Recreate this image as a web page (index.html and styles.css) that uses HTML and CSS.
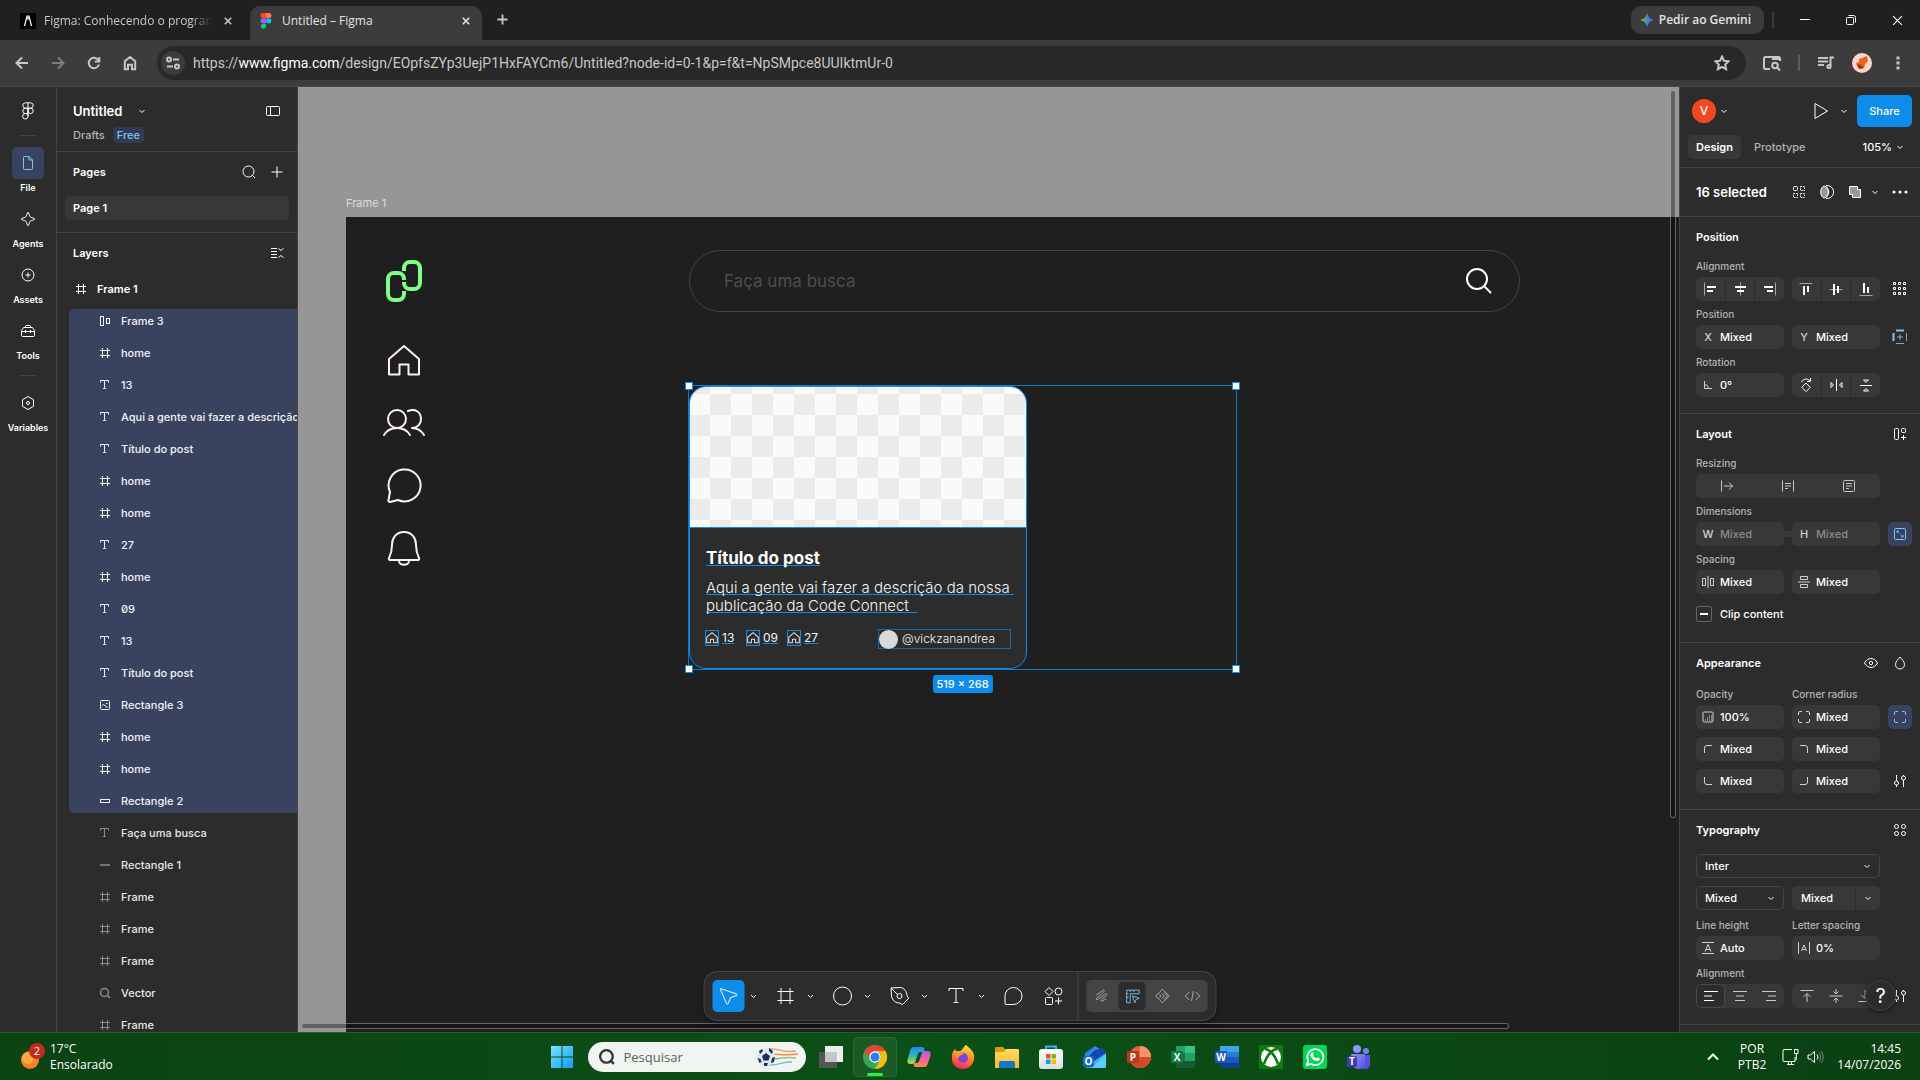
FILE: index.html
```html
<!DOCTYPE html>
<html lang="pt-BR">
<head>
<meta charset="utf-8">
<meta name="viewport" content="width=device-width, initial-scale=1">
<title>Untitled – Figma</title>
<link rel="stylesheet" href="styles.css">
</head>
<body>
<svg class="sprite" aria-hidden="true">
  <defs>
    <linearGradient id="g-win" x1="0" y1="0" x2="1" y2="1"><stop offset="0" stop-color="#7be4ff"/><stop offset="1" stop-color="#0f9bff"/></linearGradient>
    <linearGradient id="g-fold" x1="0" y1="0" x2="0" y2="1"><stop offset="0" stop-color="#ffdc5e"/><stop offset="1" stop-color="#fbb72a"/></linearGradient>
    <linearGradient id="g-fox" x1="0.7" y1="0" x2="0.4" y2="1"><stop offset="0" stop-color="#ffe24b"/><stop offset=".5" stop-color="#ff8a1e"/><stop offset="1" stop-color="#f5246e"/></linearGradient>
    <linearGradient id="g-cop1" x1="0" y1="0" x2="0" y2="1"><stop offset="0" stop-color="#1f8cf0"/><stop offset=".5" stop-color="#28b8b8"/><stop offset="1" stop-color="#c8d92e"/></linearGradient>
    <linearGradient id="g-cop2" x1="0" y1="0" x2="0" y2="1"><stop offset="0" stop-color="#b05cf0"/><stop offset=".5" stop-color="#f0609c"/><stop offset="1" stop-color="#ff8a4c"/></linearGradient>
    <linearGradient id="g-out" x1="0" y1="0" x2="1" y2="1"><stop offset="0" stop-color="#1a6fe0"/><stop offset="1" stop-color="#4fd0ff"/></linearGradient>
    <linearGradient id="g-teams" x1="0" y1="0" x2="1" y2="1"><stop offset="0" stop-color="#8f95ff"/><stop offset="1" stop-color="#5a50e0"/></linearGradient>
    <linearGradient id="g-gem" x1="0" y1="0" x2="1" y2="0"><stop offset="0" stop-color="#f7c52c"/><stop offset=".35" stop-color="#3fae6a"/><stop offset=".55" stop-color="#3b82f6"/><stop offset="1" stop-color="#3b82f6"/></linearGradient>
    <linearGradient id="g-bag" x1="0" y1="0" x2="0" y2="1"><stop offset="0" stop-color="#ffffff"/><stop offset="1" stop-color="#d9dde0"/></linearGradient>
  </defs>
  <symbol id="chev" viewBox="0 0 8 8"><path d="M1.500 3 4 5.500 6.500 3"/></symbol>
  <symbol id="x" viewBox="0 0 10 10"><path d="m1 1 8 8M9 1 1 9"/></symbol>
  <symbol id="plus" viewBox="0 0 12 12"><path d="M6 .5v11M.5 6h11"/></symbol>
  <symbol id="figma" viewBox="0 0 12 18"><path d="M3.500.8h5a2.700 2.700 0 0 1 0 5.400h-5a2.700 2.700 0 0 1 0-5.400ZM6 .8v13.700M3.500 6.200H6v5.400H3.500a2.700 2.700 0 0 1 0-5.400ZM6 11.600v2.900a2.700 2.700 0 1 1-2.500-2.900H6M8.500 6.200a2.700 2.700 0 1 1 0 5.400A2.700 2.700 0 0 1 6 8.900a2.600 2.600 0 0 1 2.500-2.700Z"/></symbol>
  <symbol id="file" viewBox="0 0 12 16"><path d="M1.500 2.500a1 1 0 0 1 1-1H7L10.500 5v8.500a1 1 0 0 1-1 1h-7a1 1 0 0 1-1-1ZM7 1.500V5h3.500"/></symbol>
  <symbol id="agents" viewBox="0 0 16 16"><path d="M8 1.200c.8 0 1.300 4 2.200 4.700.8.800 4.600 1.200 4.600 2.100s-3.800 1.400-4.600 2.200C9.300 11 8.800 14.800 8 14.800S6.700 11 5.800 10.200C5 9.400 1.200 8.900 1.200 8s3.800-1.300 4.600-2.100C6.700 5.200 7.200 1.200 8 1.200Z"/></symbol>
  <symbol id="assets" viewBox="0 0 16 16"><circle cx="8" cy="8" r="6"/><path d="M8 5.500v5M5.500 8h5"/></symbol>
  <symbol id="tools" viewBox="0 0 16 16"><path d="M3.500 4.500h9l2 3v5a1 1 0 0 1-1 1h-11a1 1 0 0 1-1-1v-5ZM5.500 4.500v-1a1 1 0 0 1 1-1h3a1 1 0 0 1 1 1v1M1.500 8.500h13M5.500 7v3M10.500 7v3"/></symbol>
  <symbol id="vars" viewBox="0 0 16 16"><path d="m8 1.500 5.500 3.200v6.600L8 14.500l-5.500-3.200V4.700Z"/><circle cx="8" cy="8" r="1.500"/></symbol>
  <symbol id="sidebar" viewBox="0 0 16 12"><rect x="1.500" y="1.500" width="13" height="9" rx="1"/><path d="M5.500 1.500v9"/></symbol>
  <symbol id="search" viewBox="0 0 14 14"><circle cx="6.500" cy="6.500" r="5.500"/><path d="m10.400 10.400 2.600 2.600"/></symbol>
  <symbol id="collapse" viewBox="0 0 14 12"><path d="M1 1.500h6M1 4.500h6M1 7.500h6M1 10.500h6M8.500 1.500l2.500 2 2.500-2M8.500 10.500l2.500-2 2.500 2"/></symbol>
  <symbol id="frame" viewBox="0 0 12 12"><path d="M3.500 1v10M8.500 1v10M1 3.500h10M1 8.500h10"/></symbol>
  <symbol id="text" viewBox="0 0 12 12"><path d="M1.500 3.500v-2h8v2M5.500 1.500v8M4 9.500h3"/></symbol>
  <symbol id="auto" viewBox="0 0 12 12"><rect x="1.500" y="1.500" width="3" height="9"/><rect x="7.500" y="3.500" width="3" height="5"/></symbol>
  <symbol id="image" viewBox="0 0 12 12"><rect x="1.500" y="1.500" width="9" height="9" rx="1"/><path d="m8.500 8.500-4-3-1.500 1M7 4.500h1.500"/></symbol>
  <symbol id="rect" viewBox="0 0 12 12"><rect x="1.500" y="4.500" width="9" height="3"/></symbol>
  <symbol id="line" viewBox="0 0 12 12"><path stroke-width="1.500" d="M1 6h10"/></symbol>
  <symbol id="zoomv" viewBox="0 0 12 12"><circle cx="5.500" cy="5.500" r="4" stroke-width="1.500"/><path stroke-width="1.500" d="m8 8 3 3"/></symbol>
  <symbol id="play" viewBox="0 0 16 18"><path stroke-linejoin="round" d="M2 1.500v15L14.500 9Z"/></symbol>
  <symbol id="dots4" viewBox="0 0 14 14"><rect x="1.500" y="1.500" width="4" height="4" rx="1"/><path stroke-dasharray="1.500 1" d="M8.500 1.500h4v4h-4ZM1.500 8.500h4v4h-4ZM8.500 8.500h4v4h-4Z"/></symbol>
  <symbol id="mask" viewBox="0 0 16 16"><path d="M7 1.600a6.500 6.500 0 1 1 0 12.800"/><ellipse cx="5.500" cy="8" rx="3.800" ry="6" fill="#999"/><path d="M6 2.500C11 5 11 11 6 13.500"/></symbol>
  <symbol id="union" viewBox="0 0 14 14"><path fill="#999" d="M1.500 1.500h8v3h3v8h-8v-3h-3Z"/></symbol>
  <symbol id="more" viewBox="0 0 16 4"><path class="solid" d="M.5 2a1.500 1.500 0 1 1 3 0 1.500 1.500 0 0 1-3 0m6 0a1.500 1.500 0 1 1 3 0 1.500 1.500 0 0 1-3 0m6 0a1.500 1.500 0 1 1 3 0 1.500 1.500 0 0 1-3 0"/></symbol>
  <symbol id="al-l" viewBox="0 0 14 14"><path class="dim" d="M1.500.5v13"/><path class="bold" d="M4 5h9M4 9h6"/></symbol>
  <symbol id="al-c" viewBox="0 0 14 14"><path class="dim" d="M7.500.5v13"/><path class="bold" d="M2 5h11M4 9h7"/></symbol>
  <symbol id="al-r" viewBox="0 0 14 14"><path class="dim" d="M12.500.5v13"/><path class="bold" d="M1 5h9M4 9h6"/></symbol>
  <symbol id="al-t" viewBox="0 0 14 14"><path class="dim" d="M.5 1.500h13"/><path class="bold" d="M5 4v9M9 4v6"/></symbol>
  <symbol id="al-m" viewBox="0 0 14 14"><path class="dim" d="M.5 7.500h13"/><path class="bold" d="M5 2v11M9 4v7"/></symbol>
  <symbol id="al-b" viewBox="0 0 14 14"><path class="dim" d="M.5 13.500h13"/><path class="bold" d="M5 1v10M9 5v6"/></symbol>
  <symbol id="grid9" viewBox="0 0 14 14"><path d="M.5.500h2v2h-2ZM5.500.500h2v2h-2ZM10.500.500h2v2h-2ZM.5 5.500h2v2h-2ZM5.500 5.500h2v2h-2ZM10.500 5.500h2v2h-2ZM.5 10.500h2v2h-2ZM5.500 10.500h2v2h-2ZM10.500 10.500h2v2h-2Z"/></symbol>
  <symbol id="constrain" viewBox="0 0 16 16"><path stroke="#7cc4f8" stroke-width="2" d="M4 1.500h8M1.500 4v8"/><path class="dim" d="M4 14.500h8M14.500 4v8M8 5v6M5 8h6"/></symbol>
  <symbol id="angle" viewBox="0 0 10 10"><path d="M1.500 1v7.500H9M1.500 4.500a4 4 0 0 1 4 4"/></symbol>
  <symbol id="rot90" viewBox="0 0 14 16"><path d="m7 6 4.200 4.300L7 14.600l-4.200-4.300ZM2.500 5A5 5 0 0 1 11 4M11.500 1v3.500H8"/></symbol>
  <symbol id="fliph" viewBox="0 0 14 14"><path d="M7.500 1v12M2 4.500v5L4.500 7ZM13 4.500v5L10.500 7Z"/></symbol>
  <symbol id="flipv" viewBox="0 0 14 14"><path d="M1 7.500h12M4.500 2h5L7 4.500ZM4.500 13h5L7 10.500Z"/></symbol>
  <symbol id="addlayout" viewBox="0 0 14 14"><rect x="1.500" y="1.500" width="4" height="11" rx="1"/><rect x="8.500" y="1.500" width="4" height="4" rx="1"/><path d="M10.500 8v5M8 10.500h5"/></symbol>
  <symbol id="rs-a" viewBox="0 0 14 12"><path d="M1.500.5v11M4 6h8.500M9 2.500 12.500 6 9 9.500"/></symbol>
  <symbol id="rs-b" viewBox="0 0 14 12"><path d="M1.500.5v11M12.500.5v11M4 3.500h6M4 6h6M4 8.500h3"/></symbol>
  <symbol id="rs-c" viewBox="0 0 14 12"><rect x="1.500" y=".5" width="11" height="11" rx="1"/><path d="M4 3.500h6M4 6h6M4 8.500h3"/></symbol>
  <symbol id="aspect" viewBox="0 0 14 14"><rect x="1.500" y="1.500" width="11" height="11" rx="1"/><path d="M4 6V4h2M10 8v2H8"/><path stroke-dasharray="1 1" d="m4 4 6 6"/></symbol>
  <symbol id="sp-h" viewBox="0 0 14 14"><path d="M7 1v12M1.500 3.500h3v7h-3ZM9.500 3.500h3v7h-3Z"/></symbol>
  <symbol id="sp-v" viewBox="0 0 14 14"><path d="M1 7h12M3.500 1.500h7v3h-7ZM3.500 9.500h7v3h-7Z"/></symbol>
  <symbol id="eye" viewBox="0 0 16 12"><path d="M1.500 6C4.500 0 11.500 0 14.500 6 11.500 12 4.500 12 1.500 6Z"/><circle cx="8" cy="6" r="1.700"/></symbol>
  <symbol id="drop" viewBox="0 0 12 14"><path d="M6 1C8 3.500 10.500 5.700 10.500 8.500a4.500 4.500 0 0 1-9 0C1.500 5.700 4 3.500 6 1Z"/></symbol>
  <symbol id="opacity" viewBox="0 0 12 12"><rect x="1" y="1" width="10" height="10" rx="1"/><path stroke-dasharray="1 1" d="M3 9h7M5 7h5M7 5h3"/></symbol>
  <symbol id="corners" viewBox="0 0 14 14"><path d="M1.500 5V3a1.500 1.500 0 0 1 1.500-1.500h2M9 1.500h2A1.500 1.500 0 0 1 12.500 3v2M12.500 9v2a1.500 1.500 0 0 1-1.500 1.500H9M5 12.500H3A1.500 1.500 0 0 1 1.500 11V9"/></symbol>
  <symbol id="c-tl" viewBox="0 0 10 10"><path d="M1.500 9V4a2.500 2.500 0 0 1 2.500-2.500h5"/></symbol>
  <symbol id="c-tr" viewBox="0 0 10 10"><path d="M8.500 9V4A2.500 2.500 0 0 0 6 1.500H1"/></symbol>
  <symbol id="c-bl" viewBox="0 0 10 10"><path d="M1.500 1v5A2.500 2.500 0 0 0 4 8.500h5"/></symbol>
  <symbol id="c-br" viewBox="0 0 10 10"><path d="M8.500 1v5A2.500 2.500 0 0 1 6 8.500H1"/></symbol>
  <symbol id="sliders" viewBox="0 0 14 14"><path d="M3.500 1v6M3.500 11v2M10.500 1v1M10.500 6v7"/><circle cx="3.500" cy="9" r="2"/><circle cx="10.500" cy="4" r="2"/></symbol>
  <symbol id="styles" viewBox="0 0 14 14"><circle cx="3.500" cy="3.500" r="2"/><circle cx="10.500" cy="3.500" r="2"/><circle cx="3.500" cy="10.500" r="2"/><circle cx="10.500" cy="10.500" r="2"/></symbol>
  <symbol id="lh" viewBox="0 0 14 14"><path d="M1 1.500h12M1 12.500h12M4 10.500l3-7 3 7M5 8.500h4"/></symbol>
  <symbol id="ls" viewBox="0 0 14 14"><path d="M1.500 1v12M12.500 1v12M4.500 10 7 4l2.500 6M5.500 8.500h3"/></symbol>
  <symbol id="ta-l" viewBox="0 0 16 12"><path d="M1 1.500h14M1 6h8M1 10.500h10"/></symbol>
  <symbol id="ta-c" viewBox="0 0 16 12"><path d="M1 1.500h14M4 6h8M3 10.500h10"/></symbol>
  <symbol id="ta-r" viewBox="0 0 16 12"><path d="M1 1.500h14M7 6h8M5 10.500h10"/></symbol>
  <symbol id="tv-t" viewBox="0 0 14 14"><path d="M.5 1.500h13M7 13V4.500M3.500 8 7 4.500 10.500 8"/></symbol>
  <symbol id="tv-m" viewBox="0 0 14 14"><path d="M.5 7h13M7 0v5M4.500 2.500 7 5l2.500-2.500M7 14V9M4.500 11.500 7 9l2.500 2.500"/></symbol>
  <symbol id="tv-b" viewBox="0 0 14 14"><path d="M.5 12.500h13M7 1v8.500M3.500 6 7 9.500 10.500 6"/></symbol>
  <symbol id="home" viewBox="0 0 34 34"><path d="M17 2 2 15v15.500h10.500v-10h9v10H32V15Z"/></symbol>
</svg>

<header class="tabstrip">
  <div class="tab">
    <svg class="fav" viewBox="0 0 16 16"><rect width="16" height="16" fill="#000"/><path d="M4.500 13 7 3h2l2.500 10M8 4v3" fill="none" stroke="#fff" stroke-width="1.200"/></svg>
    <span class="tab-title tab-title--fade">Figma: Conhecendo o programa</span>
    <button class="tab-x" aria-label="Fechar"><svg width="8" height="8"><use href="#x"/></svg></button>
  </div>
  <div class="tab tab--on">
    <svg class="fav" viewBox="0 0 16 16"><path fill="#f24e1e" d="M5 0h3v5H5a2.500 2.500 0 0 1 0-5"/><path fill="#ff7262" d="M8 0h3a2.500 2.500 0 0 1 0 5H8z"/><path fill="#a259ff" d="M5 5.300h3v5H5a2.500 2.500 0 0 1 0-5"/><circle cx="10.700" cy="7.800" r="2.600" fill="#1abcfe"/><path fill="#0acf83" d="M5 10.700h3v2.500a2.600 2.600 0 1 1-3-2.500"/></svg>
    <span class="tab-title">Untitled – Figma</span>
    <button class="tab-x" aria-label="Fechar"><svg width="8" height="8"><use href="#x"/></svg></button>
  </div>
  <button class="newtab" aria-label="Nova guia"><svg width="11" height="11"><use href="#plus"/></svg></button>
  <button class="gemini"><svg width="14" height="14" viewBox="0 0 14 14"><path class="fill" fill="url(#g-gem)" d="M7 0c.8 4 3 6.200 7 7-4 .8-6.200 3-7 7-.8-4-3-6.200-7-7 4-.8 6.200-3 7-7"/><path class="fill" fill="#f0503c" opacity=".7" d="M7 0c.4 2 1 3.300 2 4.500H5C6 3.300 6.600 2 7 0"/></svg>Pedir ao Gemini</button>
  <span class="strip-sep"></span>
  <button class="win" aria-label="Minimizar"><svg width="10" height="10" viewBox="0 0 10 10"><path d="M0 4.500h10"/></svg></button>
  <button class="win" aria-label="Restaurar"><svg width="10" height="10" viewBox="0 0 10 10"><rect x=".5" y="2.500" width="7" height="7" rx="1"/><path d="M2.500.5h5a2 2 0 0 1 2 2v5"/></svg></button>
  <button class="win" aria-label="Fechar janela"><svg width="11" height="11"><use href="#x"/></svg></button>
</header>

<nav class="browserbar">
  <button class="nav" aria-label="Voltar"><svg width="16" height="16" viewBox="0 0 16 16"><path d="M14 8H2.500M8 2.500 2.500 8 8 13.500"/></svg></button>
  <button class="nav nav--off" aria-label="Avançar"><svg width="16" height="16" viewBox="0 0 16 16"><path d="M2 8h11.500M8 2.500 13.500 8 8 13.500"/></svg></button>
  <button class="nav" aria-label="Recarregar"><svg width="16" height="16" viewBox="0 0 16 16"><path d="M13 9.500A5.200 5.200 0 1 1 12.800 6M13.300 2v4.500H8.800"/></svg></button>
  <button class="nav" aria-label="Início"><svg width="16" height="16" viewBox="0 0 16 16"><path d="M8 2 2.800 6.200v8H6v-4.500h4v4.500h3.200v-8Z"/></svg></button>
  <div class="address">
    <span class="site"><svg width="16" height="16" viewBox="0 0 16 16"><circle cx="4" cy="4.500" r="2"/><path d="M8 4.500h6M2 11.500h6"/><circle cx="12" cy="11.500" r="2"/></svg></span>
    <span class="url">https://<b>www.figma.com</b>/design/EOpfsZYp3UejP1HxFAYCm6/Untitled?node-id=0-1&amp;p=f&amp;t=NpSMpce8UUIktmUr-0</span>
    <button class="star" aria-label="Favoritar"><svg width="16" height="16" viewBox="0 0 16 16"><path d="m8 1.500 2 4.300 4.600.5-3.400 3.200.9 4.700L8 11.800l-4.100 2.400.9-4.700L1.400 6.300 6 5.800Z"/></svg></button>
  </div>
  <button class="ext" aria-label="Pesquisar guias"><svg width="20" height="18" viewBox="0 0 20 18"><path d="M8 15H3.500A1.500 1.500 0 0 1 2 13.500v-9A1.500 1.500 0 0 1 3.500 3h13A1.500 1.500 0 0 1 18 4.500V7M10 5h8"/><circle cx="13" cy="11.500" r="2.800"/><path d="m15 13.500 3 3"/></svg></button>
  <span class="bar-sep"></span>
  <button class="ext" aria-label="Mídia"><svg width="18" height="16" viewBox="0 0 18 16"><path d="M1 3h10M1 6.500h10M1 10h6M13.500 11V2.500H17"/><circle cx="12" cy="11.500" r="1.600"/></svg></button>
  <button class="ext" aria-label="Perfil"><svg width="20" height="20" viewBox="0 0 20 20"><circle class="fill" cx="10" cy="10" r="10" fill="#f9d5cc"/><path class="fill" fill="#e8641b" d="m7 6 3-1 5-2 1 5-3 3-1 4-4 1-3-3-1-3 3-1Z"/><path class="fill" fill="#9c3512" d="m5 11 4 1 3 3-5 1Z"/></svg></button>
  <button class="ext" aria-label="Menu"><svg width="4" height="14" viewBox="0 0 4 14"><path class="fill" fill="#c7c7c7" d="M.5.500h3v3h-3zM.5 5.500h3v3h-3zM.5 10.500h3v3h-3z"/></svg></button>
</nav>

<main class="app">
  <nav class="rail">
    <button class="rail-btn" aria-label="Menu principal"><svg width="12" height="18"><use href="#figma"/></svg></button>
    <span class="rail-line"></span>
    <button class="rail-item rail-item--on"><i><svg width="12" height="16"><use href="#file"/></svg></i>File</button>
    <button class="rail-item"><i><svg width="16" height="16"><use href="#agents"/></svg></i>Agents</button>
    <button class="rail-item"><i><svg width="16" height="16"><use href="#assets"/></svg></i>Assets</button>
    <button class="rail-item"><i><svg width="16" height="16"><use href="#tools"/></svg></i>Tools</button>
    <span class="rail-line rail-line--low"></span>
    <button class="rail-item"><i><svg width="16" height="16"><use href="#vars"/></svg></i>Variables</button>
  </nav>

  <aside class="left">
    <section class="doc">
      <div class="doc-row"><h1>Untitled</h1><svg width="8" height="8"><use href="#chev"/></svg><button class="push" aria-label="Recolher"><svg width="16" height="12"><use href="#sidebar"/></svg></button></div>
      <div class="doc-sub"><a href="#drafts">Drafts</a><span class="free">Free</span></div>
    </section>
    <section class="pages">
      <div class="head"><h2>Pages</h2><button aria-label="Buscar"><svg width="14" height="14"><use href="#search"/></svg></button><button aria-label="Nova página"><svg width="12" height="12"><use href="#plus"/></svg></button></div>
      <a class="page" href="#page-1">Page 1</a>
    </section>
    <section class="layers">
      <div class="head"><h2>Layers</h2><button aria-label="Recolher camadas"><svg width="14" height="12"><use href="#collapse"/></svg></button></div>
      <div class="layer layer--root"><svg><use href="#frame"/></svg>Frame 1</div>
      <ul class="tree tree--sel">
        <li class="layer"><svg><use href="#auto"/></svg>Frame 3</li>
        <li class="layer"><svg><use href="#frame"/></svg>home</li>
        <li class="layer"><svg><use href="#text"/></svg>13</li>
        <li class="layer"><svg><use href="#text"/></svg>Aqui a gente vai fazer a descrição</li>
        <li class="layer"><svg><use href="#text"/></svg>Título do post</li>
        <li class="layer"><svg><use href="#frame"/></svg>home</li>
        <li class="layer"><svg><use href="#frame"/></svg>home</li>
        <li class="layer"><svg><use href="#text"/></svg>27</li>
        <li class="layer"><svg><use href="#frame"/></svg>home</li>
        <li class="layer zero"><svg><use href="#text"/></svg>09</li>
        <li class="layer"><svg><use href="#text"/></svg>13</li>
        <li class="layer"><svg><use href="#text"/></svg>Título do post</li>
        <li class="layer"><svg><use href="#image"/></svg>Rectangle 3</li>
        <li class="layer"><svg><use href="#frame"/></svg>home</li>
        <li class="layer"><svg><use href="#frame"/></svg>home</li>
        <li class="layer"><svg><use href="#rect"/></svg>Rectangle 2</li>
      </ul>
      <ul class="tree tree--rest">
        <li class="layer"><svg><use href="#text"/></svg>Faça uma busca</li>
        <li class="layer"><svg><use href="#line"/></svg>Rectangle 1</li>
        <li class="layer"><svg><use href="#frame"/></svg>Frame</li>
        <li class="layer"><svg><use href="#frame"/></svg>Frame</li>
        <li class="layer"><svg><use href="#frame"/></svg>Frame</li>
        <li class="layer"><svg><use href="#zoomv"/></svg>Vector</li>
        <li class="layer"><svg><use href="#frame"/></svg>Frame</li>
      </ul>
    </section>
  </aside>

  <section class="canvas">
    <span class="frame-name">Frame 1</span>
    <div class="artboard">
      <svg class="node logo" viewBox="0 0 38 44"><path d="M19 12V9a6 6 0 0 1 6-6h4a6 6 0 0 1 6 6v15a6 6 0 0 1-6 6h-4a6 6 0 0 1-6-6v-1M19 21v-1a6 6 0 0 0-6-6H9a6 6 0 0 0-6 6v15a6 6 0 0 0 6 6h4a6 6 0 0 0 6-6v-3"/></svg>
      <svg class="node n-home"><use href="#home"/></svg>
      <svg class="node n-people" viewBox="0 0 44 30"><circle cx="15" cy="11" r="9"/><path d="M2 27c3-5 8-7 13-7s10 2 13 7M26 3c7-3 13 1 13 8 0 5-3.500 9-9 9 5 0 9 2 12 7"/></svg>
      <svg class="node n-chat" viewBox="0 0 38 38"><path d="M5 26a16 16 0 1 1 8 8L5 36c-1 0-2-1-1.500-2Z"/></svg>
      <svg class="node n-bell" viewBox="0 0 34 38"><path d="M17 2C9 2 5 8 5 15c0 7-1.500 10-3 13-.5 1 0 2 1 2h28c1 0 1.500-1 1-2-1.500-3-3-6-3-13C29 8 25 2 17 2ZM12 31c0 5 10 5 10 0"/></svg>
      <div class="node searchbox"><span>Faça uma busca</span><svg width="28" height="28" viewBox="0 0 28 28"><circle cx="12" cy="12" r="10"/><path d="m19.500 19.500 6.500 6.500"/></svg></div>

      <article class="node card">
        <div class="card-img"></div>
        <div class="card-body">
          <h3><span class="mark">Título do post</span></h3>
          <p><span class="mark">Aqui a gente vai fazer a descrição da nossa&nbsp;<br>publicação da Code Connect&nbsp;&nbsp;</span></p>
          <div class="meta">
            <span class="stat"><svg><use href="#home"/></svg><span class="mark">13</span></span>
            <span class="stat"><svg><use href="#home"/></svg><span class="mark">09</span></span>
            <span class="stat"><svg><use href="#home"/></svg><span class="mark">27</span></span>
            <span class="author"><i></i>@vickzanandrea</span>
          </div>
        </div>
      </article>
      <div class="node bounds"><i></i><i></i><i></i><i></i><span class="size">519 × 268</span></div>
    </div>
    <span class="scroll scroll--v"></span>
    <span class="scroll scroll--h"></span>
  </section>

  <aside class="right">
    <section class="top">
      <div class="top-row"><span class="avatar">V</span><svg class="c"><use href="#chev"/></svg><button class="play" aria-label="Apresentar"><svg width="16" height="18"><use href="#play"/></svg></button><svg class="c c--p"><use href="#chev"/></svg><button class="share">Share</button></div>
      <div class="top-row top-row--tabs"><button class="ptab ptab--on">Design</button><button class="ptab">Prototype</button><button class="pct">105%<svg class="c"><use href="#chev"/></svg></button></div>
    </section>
    <section class="selrow"><h2>16 selected</h2><button aria-label="Componentes"><svg width="14" height="14"><use href="#dots4"/></svg></button><button aria-label="Máscara"><svg width="16" height="16"><use href="#mask"/></svg></button><button aria-label="União"><svg width="14" height="14"><use href="#union"/></svg></button><svg class="c"><use href="#chev"/></svg><button aria-label="Mais"><svg width="16" height="4"><use href="#more"/></svg></button></section>

    <section class="sec">
      <div class="sec-head"><h3>Position</h3></div>
      <div class="labels"><span>Alignment</span></div>
      <div class="row">
        <div class="seg"><button aria-label="Esquerda"><svg><use href="#al-l"/></svg></button><button aria-label="Centro"><svg><use href="#al-c"/></svg></button><button aria-label="Direita"><svg><use href="#al-r"/></svg></button></div>
        <div class="seg"><button aria-label="Topo"><svg><use href="#al-t"/></svg></button><button aria-label="Meio"><svg><use href="#al-m"/></svg></button><button aria-label="Base"><svg><use href="#al-b"/></svg></button></div>
        <button class="ico" aria-label="Organizar"><svg><use href="#grid9"/></svg></button>
      </div>
      <div class="labels"><span>Position</span></div>
      <div class="row">
        <label class="fld"><span>X</span><input value="Mixed"></label>
        <label class="fld"><span>Y</span><input value="Mixed"></label>
        <button class="ico" aria-label="Restrições"><svg class="s16"><use href="#constrain"/></svg></button>
      </div>
      <div class="labels"><span>Rotation</span></div>
      <div class="row">
        <label class="fld"><span><svg class="s10"><use href="#angle"/></svg></span><input value="0°" aria-label="Rotation"></label>
        <div class="seg"><button aria-label="Girar"><svg class="s16"><use href="#rot90"/></svg></button><button aria-label="Espelhar H"><svg><use href="#fliph"/></svg></button><button aria-label="Espelhar V"><svg><use href="#flipv"/></svg></button></div>
      </div>
    </section>

    <section class="sec">
      <div class="sec-head"><h3>Layout</h3><button class="ico" aria-label="Auto layout"><svg><use href="#addlayout"/></svg></button></div>
      <div class="labels"><span>Resizing</span></div>
      <div class="row">
        <div class="seg seg--wide"><button aria-label="Largura"><svg><use href="#rs-a"/></svg></button><button aria-label="Altura"><svg><use href="#rs-b"/></svg></button><button aria-label="Fixo"><svg><use href="#rs-c"/></svg></button></div>
      </div>
      <div class="labels"><span>Dimensions</span></div>
      <div class="row row--link">
        <label class="fld fld--off"><span>W</span><input value="Mixed"></label>
        <label class="fld fld--off"><span>H</span><input value="Mixed"></label>
        <button class="ico ico--on" aria-label="Proporção"><svg><use href="#aspect"/></svg></button>
      </div>
      <div class="labels"><span>Spacing</span></div>
      <div class="row">
        <label class="fld"><span><svg><use href="#sp-h"/></svg></span><input value="Mixed" aria-label="Espaço horizontal"></label>
        <label class="fld"><span><svg><use href="#sp-v"/></svg></span><input value="Mixed" aria-label="Espaço vertical"></label>
      </div>
      <label class="clip"><input type="checkbox">Clip content</label>
    </section>

    <section class="sec">
      <div class="sec-head"><h3>Appearance</h3><button class="ico" aria-label="Visibilidade"><svg class="s16"><use href="#eye"/></svg></button><button class="ico" aria-label="Mesclagem"><svg><use href="#drop"/></svg></button></div>
      <div class="labels labels--tall"><span>Opacity</span><span>Corner radius</span></div>
      <div class="row">
        <label class="fld"><span><svg class="s12"><use href="#opacity"/></svg></span><input value="100%" aria-label="Opacity"></label>
        <label class="fld"><span><svg><use href="#corners"/></svg></span><input value="Mixed" aria-label="Corner radius"></label>
        <button class="ico ico--on" aria-label="Cantos"><svg><use href="#corners"/></svg></button>
      </div>
      <div class="row row--gap">
        <label class="fld"><span><svg class="s10"><use href="#c-tl"/></svg></span><input value="Mixed" aria-label="Canto 1"></label>
        <label class="fld"><span><svg class="s10"><use href="#c-tr"/></svg></span><input value="Mixed" aria-label="Canto 2"></label>
      </div>
      <div class="row row--gap">
        <label class="fld"><span><svg class="s10"><use href="#c-bl"/></svg></span><input value="Mixed" aria-label="Canto 3"></label>
        <label class="fld"><span><svg class="s10"><use href="#c-br"/></svg></span><input value="Mixed" aria-label="Canto 4"></label>
        <button class="ico" aria-label="Ajustes"><svg><use href="#sliders"/></svg></button>
      </div>
    </section>

    <section class="sec">
      <div class="sec-head"><h3>Typography</h3><button class="ico" aria-label="Estilos"><svg><use href="#styles"/></svg></button></div>
      <div class="row row--gap"><div class="sel sel--wide"><select aria-label="Fonte"><option>Inter</option></select><svg class="c"><use href="#chev"/></svg></div></div>
      <div class="row row--gap">
        <div class="sel"><select aria-label="Peso"><option>Mixed</option></select><svg class="c"><use href="#chev"/></svg></div>
        <div class="combo"><input value="Mixed" aria-label="Tamanho"><button aria-label="Tamanhos"><svg class="c"><use href="#chev"/></svg></button></div>
      </div>
      <div class="labels labels--tall"><span>Line height</span><span>Letter spacing</span></div>
      <div class="row">
        <label class="fld"><span><svg><use href="#lh"/></svg></span><input value="Auto" aria-label="Line height"></label>
        <label class="fld"><span><svg><use href="#ls"/></svg></span><input value="0%" aria-label="Letter spacing"></label>
      </div>
      <div class="labels"><span>Alignment</span></div>
      <div class="row">
        <div class="seg seg--flat"><button class="on" aria-label="Texto à esquerda"><svg class="s16"><use href="#ta-l"/></svg></button><button aria-label="Texto ao centro"><svg class="s16"><use href="#ta-c"/></svg></button><button aria-label="Texto à direita"><svg class="s16"><use href="#ta-r"/></svg></button></div>
        <div class="seg seg--flat"><button aria-label="Texto no topo"><svg><use href="#tv-t"/></svg></button><button aria-label="Texto no meio"><svg><use href="#tv-m"/></svg></button><button aria-label="Texto na base"><svg><use href="#tv-b"/></svg></button></div>
        <button class="ico" aria-label="Mais ajustes"><svg><use href="#sliders"/></svg></button>
      </div>
    </section>
    <button class="help" aria-label="Ajuda">?</button>
  </aside>

  <div class="toolbar">
    <button class="tool tool--on" aria-label="Mover"><svg viewBox="0 0 24 24"><path d="M4 4.500 20 10c1 .4 1 1.300 0 1.600l-6 2-2.300 6c-.4 1-1.300 1-1.600 0L4 5.500Z"/></svg></button><button class="caret" aria-label="Opções de mover"><svg><use href="#chev"/></svg></button>
    <button class="tool" aria-label="Quadro"><svg viewBox="0 0 24 24"><path d="M7.500 4v16M16.500 4v16M4 7.500h16M4 16.500h16"/></svg></button><button class="caret" aria-label="Opções de quadro"><svg><use href="#chev"/></svg></button>
    <button class="tool" aria-label="Forma"><svg viewBox="0 0 24 24"><circle cx="12" cy="12" r="9"/></svg></button><button class="caret" aria-label="Opções de forma"><svg><use href="#chev"/></svg></button>
    <button class="tool" aria-label="Caneta"><svg viewBox="0 0 24 24"><path d="m3.500 4 9.500-.5c4 .5 6 4 6.500 8l1.500 3-6 6-3-1.500c-4 0-7-2.500-8-7ZM3.500 4l7 7"/><circle cx="12" cy="12" r="2.500"/></svg></button><button class="caret" aria-label="Opções de caneta"><svg><use href="#chev"/></svg></button>
    <button class="tool" aria-label="Texto"><svg viewBox="0 0 24 24"><path d="M4.500 7V4.500h14V7M11.500 4.500v14M9 18.500h5"/></svg></button><button class="caret" aria-label="Opções de texto"><svg><use href="#chev"/></svg></button>
    <button class="tool tool--last" aria-label="Comentário"><svg viewBox="0 0 24 24"><path d="M12 3.500a8.500 8.500 0 1 1 0 17H4.500a1 1 0 0 1-1-1V12A8.500 8.500 0 0 1 12 3.500Z"/></svg></button>
    <button class="tool" aria-label="Ações"><svg viewBox="0 0 24 24"><path d="m7.500 3.500 4 4-4 4-4-4ZM17 13.500v7M13.500 17h7"/><circle cx="17" cy="7.500" r="3.500"/><rect x="4" y="13.500" width="7" height="7" rx="1"/></svg></button>
    <div class="modes">
      <button aria-label="Desenhar"><svg viewBox="0 0 20 20"><path d="m3 9 7-5c2-1 2.500.5 1 2l-7 6c-1.500 2-.5 2.500 1.500 1.500l7-5.500c2.500-1 3 .5 1 2l-4.500 4c-1 1-.5 2.500 1 1.500l4-2.500"/></svg></button>
      <button class="on" aria-label="Design"><svg viewBox="0 0 20 20"><path d="M3.500 3.500h14v4h-10v10h-4ZM7.500 3.500v2M11.500 3.500v2M3.500 7.500h2M3.500 11.500h2M10 10l7.500 2.500-3.500 1.500-1.500 3.500Z"/></svg></button>
      <button aria-label="Dev"><svg viewBox="0 0 20 20"><path d="m10 2.500 7.500 7.500-7.500 7.500L2.500 10ZM9 7l3 3-3 3M11.500 6l4 4-4 4M6.500 8l2 2-2 2"/></svg></button>
      <button aria-label="Código"><svg viewBox="0 0 20 20"><path d="M6.500 5.500 2 10l4.500 4.500M13.500 5.500 18 10l-4.500 4.500M11 4.500 9 15.500"/></svg></button>
    </div>
  </div>
</main>

<footer class="taskbar">
  <button class="weather"><svg width="26" height="28" viewBox="0 0 26 28"><circle cx="10" cy="17" r="9" fill="#f58220"/><circle cx="8" cy="15" r="6" fill="#ffa63c"/><circle cx="17" cy="8" r="8" fill="#c42b1c"/><text x="17" y="12" text-anchor="middle" fill="#fff" font-size="11">2</text></svg><span>17°C<br>Ensolarado</span></button>
  <div class="apps">
    <button aria-label="Iniciar"><svg viewBox="0 0 24 24"><path fill="url(#g-win)" d="M1 1h10.500v10.500H1zM12.500 1H23v10.500H12.500zM1 12.500h10.500V23H1zM12.500 12.500H23V23H12.500z"/></svg></button>
    <label class="tb-search"><svg width="16" height="16" viewBox="0 0 14 14"><use href="#search"/></svg><input placeholder="Pesquisar" aria-label="Pesquisar">
      <svg width="42" height="24" viewBox="0 0 42 24"><g fill="none" stroke-width="1.500"><path stroke="#f0a070" d="M12 4c12-1 14 4 28 2"/><path stroke="#f58a3c" d="M14 9c12 0 14 2 28 0"/><path stroke="#8cc878" d="M16 14c10 0 14-3 24-1"/><path stroke="#78b4f0" d="M12 20c12 1 14-4 24-3"/></g><circle cx="10" cy="12" r="9" fill="#dfe6f2"/><path fill="#1d3058" d="m10 8 4 3-1.500 4.500h-5L6 11ZM3 6l3-2 1 2-3 3ZM13 3l4 3-1 3-3-3ZM1.500 13l3 1 1 3-2 1ZM16 13l3-1-1 5-3 1ZM8 18h4l-1 3H8Z"/></svg></label>
    <button aria-label="Visão de tarefas"><svg viewBox="0 0 24 24"><path fill="#555" d="M0 7h18v16H0z"/><path fill="#eee" d="M6 1h18v16H6z"/><path fill="#c4c8c4" d="M6 7h12v10H6z"/></svg></button>
    <button class="run" aria-label="Chrome"><svg viewBox="0 0 24 24"><circle cx="12" cy="12" r="12" fill="#34a853"/><path fill="#ea4335" d="M12 0a12 12 0 0 1 10.400 6H12a6 6 0 0 0-5.200 9L1.600 6A12 12 0 0 1 12 0"/><path fill="#fbbc05" d="M22.400 6A12 12 0 0 1 12 24l5.200-9a6 6 0 0 0-.7-7.500L12 6z"/><circle cx="12" cy="12" r="5.800" fill="#fff"/><circle cx="12" cy="12" r="4.600" fill="#2f7df0"/></svg></button>
    <button aria-label="Copilot"><svg viewBox="0 0 24 24"><path fill="url(#g-cop1)" d="M7 2h8c2 0 2 1 2.500 3l.5 2h-4c-2 0-3 1-3.500 3l-2 6c-.5 2-1.500 3-3.500 3H3c-3 0-3-3-2-6l2-7c.8-3 2-4 4-4"/><path fill="url(#g-cop2)" d="M17 22H9c-2 0-2-1-2.500-3l-.5-1h3c2 0 3-1 3.500-3l2-6c.5-2 1.500-3 3.500-3H21c3 0 3 3 2 6l-2 6c-.8 3-2 4-4 4"/></svg></button>
    <button aria-label="Firefox"><svg viewBox="0 0 24 24"><path fill="url(#g-fox)" d="M15 0c2 2 7 5 8 10 1 8-4 14-11 14S0 19 1 11c0-3 1-5 3-7l1 2 4 0c2 0 3-4 6-6"/><circle cx="12" cy="13" r="5" fill="#7b45d8"/><path fill="#ff9a1e" d="M3 8c4-2 8-1 10 2-3-.5-4 0-5 2-2 1-5-1-5-4"/></svg></button>
    <button aria-label="Explorador"><svg viewBox="0 0 24 24"><path fill="#d99a0f" d="M0 3a1 1 0 0 1 1-1h7l3 3v4H0z"/><path fill="url(#g-fold)" d="M0 7h9l2-3h12a1 1 0 0 1 1 1v18H0z"/><path fill="#0f78c8" d="M4 23v-5a2 2 0 0 1 2-2h12a2 2 0 0 1 2 2v5z"/></svg></button>
    <button aria-label="Store"><svg viewBox="0 0 24 24"><path fill="none" stroke="#35b6f2" stroke-width="2" d="M7 7V1.500h10V7"/><rect x="0" y="4" width="24" height="20" rx="3" fill="url(#g-bag)"/><path fill="#f25022" d="M7 9h4.500v4.500H7z"/><path fill="#7fba00" d="M12.500 9H17v4.500h-4.500z"/><path fill="#00a4ef" d="M7 14.500h4.500V19H7z"/><path fill="#ffb900" d="M12.500 14.500H17V19h-4.500z"/></svg></button>
    <button aria-label="Outlook"><svg viewBox="0 0 24 24"><path fill="url(#g-out)" d="M2 8 12 1l11 7v13a2 2 0 0 1-2 2H4a2 2 0 0 1-2-2z"/><path fill="#1546b0" d="m12 5 8-2 3 5-12 8-9-1z"/><path fill="#58d0ff" d="M23 9v12a2 2 0 0 1-2 2H8z"/><rect y="11" width="11" height="11" rx="2" fill="#1267d6"/><text x="5.500" y="20" text-anchor="middle" class="logo-l">O</text></svg></button>
    <button aria-label="PowerPoint"><svg viewBox="0 0 24 24"><circle cx="13" cy="12" r="11" fill="#e8623c"/><path fill="#ff9070" d="M13 1a11 11 0 0 1 11 11H13z"/><path fill="#d0492c" d="M2 12h22a11 11 0 0 1-22 0"/><rect y="6" width="12" height="12" rx="1" fill="#b83a1d"/><text x="6" y="16" text-anchor="middle" class="logo-l">P</text></svg></button>
    <button aria-label="Excel"><svg viewBox="0 0 24 24"><path fill="#21a366" d="M5 1h19v22H5z"/><path fill="#33c481" d="M14 1h10v7H14z"/><path fill="#107c41" d="M5 8h9v8H5z"/><path fill="#185c37" d="M5 16h19v7H5z"/><rect y="6" width="12" height="12" rx="1" fill="#107c41"/><text x="6" y="16" text-anchor="middle" class="logo-l">X</text></svg></button>
    <button aria-label="Word"><svg viewBox="0 0 24 24"><path fill="#41a5ee" d="M5 1h19v6H5z"/><path fill="#2b7cd3" d="M5 7h19v5H5z"/><path fill="#185abd" d="M5 12h19v6H5z"/><path fill="#103f91" d="M5 18h19v5H5z"/><rect y="6" width="12" height="12" rx="1" fill="#185abd"/><text x="6" y="16" text-anchor="middle" class="logo-l">W</text></svg></button>
    <button aria-label="Xbox"><svg viewBox="0 0 24 24"><rect width="24" height="24" rx="1" fill="#107c10"/><circle cx="12" cy="12" r="10" fill="#fff"/><path fill="none" stroke="#107c10" stroke-width="2.500" d="M5 19C7 13 10 9 12 7c2 2 5 6 7 12M6 4c2 0 4 1 6 3 2-2 4-3 6-3"/></svg></button>
    <button aria-label="WhatsApp"><svg viewBox="0 0 24 24"><rect width="24" height="24" rx="3" fill="#00d757"/><path fill="none" stroke="#fff" stroke-width="1.700" d="m4 20 1.200-4.300A8 8 0 1 1 8.300 19Z"/><path fill="#fff" d="M9 7.500c.8-.5 1.300 0 1.600 1 .3.900-.6 1.300-.4 1.800.6 1.500 1.800 2.600 3.200 3 .6.100 1-1 1.600-.8 1.300.5 2 .9 1.600 1.900-.8 2-3 1.900-5.200.8-2.500-1.300-4.500-4.200-3.900-6.200.2-.7.800-1.200 1.500-1.500"/></svg></button>
    <button aria-label="Teams"><svg viewBox="0 0 24 24"><circle cx="10" cy="4" r="4" fill="#8f95ff"/><circle cx="19" cy="6" r="3" fill="#7a7df5"/><path fill="#5a50e0" d="M14 10h9v9a4 4 0 0 1-9 1z"/><path fill="url(#g-teams)" d="M4 9h14v9a6 6 0 0 1-12 1z"/><rect y="11" width="10" height="11" rx="1.500" fill="#3b3bb8"/><text x="5" y="20" text-anchor="middle" class="logo-l">T</text></svg></button>
  </div>
  <div class="tray">
    <svg width="12" height="8" viewBox="0 0 12 8"><path d="m1 6.500 5-5 5 5"/></svg>
    <span class="lang">POR<br>PTB2</span>
    <svg width="17" height="18" viewBox="0 0 17 18"><path d="M10 1.500H2a1 1 0 0 0-1 1v10a1 1 0 0 0 1 1h11V9M5 16.500h7M6.500 13.500v3M9.500 13.500v3M12.500 1.500h3.500v4h-3.500ZM14.300 5.500V12"/></svg>
    <svg width="17" height="16" viewBox="0 0 17 16"><path d="M1 6v4h2.500L7.500 13.500v-11L3.500 6ZM10 5.500a4 4 0 0 1 0 5"/><path opacity=".4" d="M12 3.500a7 7 0 0 1 0 9M14 2a9 9 0 0 1 0 12"/></svg>
    <time>14:45<br>14/07/2026</time>
  </div>
</footer>
</body>
</html>
```
FILE: styles.css
```css
* { box-sizing: border-box; }
html, body { height: 100%; }
body {
  margin: 0;
  display: flex;
  flex-direction: column;
  min-height: 100vh;
  overflow: hidden;
  background: #1f2120;
  color: #fff;
  font: 500 11px/16px Inter, "Liberation Sans", sans-serif;
}
h1, h2, h3, p, ul { margin: 0; padding: 0; font: inherit; }
ul { list-style: none; }
a { color: inherit; text-decoration: none; }
button, input, select { font: inherit; color: inherit; margin: 0; padding: 0; border: 0; background: none; }
button { display: flex; align-items: center; justify-content: center; white-space: nowrap; }
input { min-width: 0; outline: 0; }
svg { display: block; flex: none; fill: none; stroke: currentColor; }
.sprite { position: absolute; width: 0; height: 0; }
.solid { fill: currentColor; stroke: none; }
.fill { stroke: none; }
.dim { opacity: .55; }
.bold { stroke-width: 2; }

/* Browser tab strip */
.tabstrip {
  flex: none;
  display: flex;
  align-items: center;
  height: 40px;
  background: #1f2120;
  color: #c7c7c7;
  font: 400 12px/16px "Open Sans", sans-serif;
}
.tab { display: flex; align-items: center; align-self: flex-end; width: 240px; height: 34px; padding: 0 4px 4px 20px; }
.tab--on { width: 232px; margin-left: 10px; padding: 0 8px 4px 8px; border-radius: 10px 10px 0 0; background: #3c3c3c; color: #e3e3e3; }
.fav { width: 16px; height: 16px; stroke: none; margin-right: 8px; }
.tab-title { flex: 1; overflow: hidden; white-space: nowrap; }
.tab-title--fade { -webkit-mask-image: linear-gradient(90deg, #000 88%, transparent); mask-image: linear-gradient(90deg, #000 88%, transparent); }
.tab-x { width: 16px; height: 16px; margin-left: 8px; }
.tab-x svg { stroke-width: 2; }
.newtab { width: 40px; height: 28px; margin-bottom: 1px; }
.newtab svg { stroke-width: 2; }
.gemini { height: 28px; margin-left: auto; padding: 0 13px 0 9px; gap: 5px; border-radius: 10px; background: #3c3c3c; color: #e3e3e3; font-weight: 600; }
.strip-sep { width: 2px; height: 16px; margin: 0 8px; background: #3c3c3c; }
.win { width: 46px; height: 40px; color: #fff; }

/* Address bar */
.browserbar {
  flex: none;
  display: flex;
  align-items: center;
  height: 47px;
  padding: 0 4px;
  border-bottom: 1px solid #4a4a4a;
  background: #3c3c3c;
  color: #c7c7c7;
}
.nav { width: 36px; height: 36px; }
.nav svg, .star svg, .ext svg { stroke-width: 2; }
.nav--off { color: #7c7c7c; }
.address { flex: 1; display: flex; align-items: center; height: 34px; margin-left: 9px; padding: 0 16px 0 4px; border-radius: 17px; background: #282828; }
.site { display: flex; align-items: center; justify-content: center; width: 24px; height: 24px; border-radius: 50%; background: #3c3c3c; margin-right: 8px; }
.site svg { stroke-width: 2; }
.url { flex: 1; white-space: nowrap; overflow: hidden; font: 400 14px/20px Roboto, sans-serif; }
.url b { font-weight: 400; color: #fff; }
.ext { width: 36px; height: 36px; }
.address + .ext { margin-left: 8px; }
.bar-sep { width: 2px; height: 16px; margin: 0 8px; background: #5c5c5c; }

/* Editor */
.app { flex: 1; min-height: 0; display: flex; position: relative; background: #2c2c2c; }
.rail { flex: none; width: 57px; display: flex; flex-direction: column; align-items: center; padding-top: 8px; border-right: 1px solid #444; }
.rail-btn { width: 32px; height: 32px; }
.rail-line { width: 16px; height: 1px; margin: 8px 0 11px; background: #444; }
.rail-line--low { margin: 4px 0 11px; }
.rail-item { flex-direction: column; height: 56px; justify-content: flex-start; font-size: 9px; font-weight: 600; line-height: 18px; }
.rail-item i { display: flex; align-items: center; justify-content: center; width: 32px; height: 32px; border-radius: 5px; }
.rail-item--on i { background: #394360; color: #7cc4f8; }

.left { flex: none; width: 241px; display: flex; flex-direction: column; overflow: hidden; border-right: 1px solid #444; }
.left h2, .right h2, .right h3 { flex: 1; font-weight: 600; }
.doc { padding: 12px 16px 8px; border-bottom: 1px solid #444; }
.doc-row { display: flex; align-items: center; height: 24px; gap: 16px; margin-bottom: 4px; }
.doc-row h1 { font-size: 13px; font-weight: 600; }
.push { margin-left: auto; }
.doc-sub { display: flex; align-items: center; gap: 8px; height: 16px; color: #b3b3b3; }
.free { padding: 0 4px; border-radius: 4px; background: #323b52; color: #7cc4f8; }
.pages { padding: 0 8px 12px; border-bottom: 1px solid #444; }
.head { display: flex; align-items: center; height: 40px; padding: 0 0 0 8px; gap: 4px; }
.head button { width: 24px; height: 24px; }
.page { display: block; margin-top: 4px; padding: 4px 8px; border-radius: 5px; background: #383838; font-weight: 600; }
.layers > .head { padding: 0 8px 0 16px; }
.layer { display: flex; align-items: center; gap: 9px; height: 24px; white-space: nowrap; }
.layer svg { width: 12px; height: 12px; margin-right: 1px; }
.layer--root { margin: 4px 0 8px; padding-left: 18px; font-weight: 600; }
.tree { display: grid; gap: 8px; margin-left: 12px; padding-left: 30px; }
.tree--sel { border-radius: 5px 0 0 5px; background: #394360; color: #f2f2f2; }
.tree--rest { margin-top: 8px; color: #e6e6e6; }
.tree--rest svg { color: #8c8c8c; }
.zero { font-feature-settings: "zero"; }

/* Canvas */
.canvas { flex: 1; min-width: 0; position: relative; overflow: hidden; background: #969696; }
.frame-name { position: absolute; left: 48px; top: 108px; color: #dcdcdc; font-weight: 400; }
.artboard { position: absolute; inset: 130px 0 0 48px; background: #1f1f1f; }
.node { position: absolute; }
.artboard > svg { color: #fff0f0; stroke-width: 2; stroke-linejoin: round; stroke-linecap: round; }
.artboard > .logo { left: 39px; top: 42px; width: 38px; height: 44px; color: #7fff8a; stroke-width: 4; stroke-linecap: butt; }
.n-home { left: 41px; top: 127px; width: 34px; height: 34px; }
.n-people { left: 36px; top: 191px; width: 44px; height: 30px; }
.n-chat { left: 39px; top: 249px; width: 38px; height: 38px; }
.n-bell { left: 41px; top: 313px; width: 34px; height: 38px; }
.searchbox { left: 343px; top: 33px; width: 831px; height: 62px; display: flex; align-items: center; justify-content: space-between; padding: 0 26px 0 34px; border: 1px solid #444; border-radius: 31px; color: #4d4d4d; font: 400 17px/24px Inter, sans-serif; }
.searchbox svg { color: #fff; stroke-width: 2; }
.card { left: 343px; top: 169px; width: 338px; height: 283px; overflow: hidden; border: 1px solid #0d8ce9; border-radius: 17px; background: #2c2c2c; font-family: Inter, sans-serif; font-weight: 400; color: #f5f5f5; }
.card-img { height: 141px; border-bottom: 1px solid #0d8ce9; background: repeating-conic-gradient(#fafafa 0 25%, #ebebeb 0 50%) 20px 7px / 42px 42px; }
.card-body { padding: 18px 15px 0 16px; }
.card h3 { font-size: 17px; line-height: 24px; font-weight: 700; color: #fff; }
.card p { margin-top: 9px; font-size: 15px; line-height: 18px; font-weight: 300; white-space: nowrap; }
.mark { text-decoration: underline 1px #0d8ce9; text-underline-offset: 1px; text-decoration-skip-ink: none; }
.meta { display: flex; align-items: center; gap: 12px; height: 20px; margin-top: 13px; font-size: 12px; }
.stat { display: flex; align-items: center; gap: 3px; width: 29px; }
.stat svg { width: 14px; height: 16px; margin-left: -1px; border: 1px solid #0d8ce9; color: #ead8d8; stroke-width: 3; }
.author { display: flex; align-items: center; gap: 4px; width: 133px; height: 20px; margin: 2px 0 0 auto; border: 1px solid #0f6ab0; font-weight: 300; }
.author i { width: 19px; height: 19px; border-radius: 50%; background: #d9d9d9; }
.bounds { left: 342px; top: 168px; width: 549px; height: 285px; border: 1px solid #0d7bcb; }
.bounds i { position: absolute; width: 8px; height: 8px; border: 1px solid #0d8ce9; background: #fff; }
.bounds i:nth-child(1) { left: -4px; top: -4px; }
.bounds i:nth-child(2) { right: -4px; top: -4px; }
.bounds i:nth-child(3) { left: -4px; bottom: -4px; }
.bounds i:nth-child(4) { right: -4px; bottom: -4px; }
.size { position: absolute; left: 50%; top: 289px; transform: translateX(-50%); padding: 1px 4px; border-radius: 3px; background: #0d8ce9; white-space: nowrap; }
.scroll { position: absolute; border: 1px solid rgba(255, 255, 255, .35); border-radius: 3px; background: rgba(0, 0, 0, .35); }
.scroll--v { right: 3px; top: 3px; width: 6px; height: 77%; }
.scroll--h { left: 3px; bottom: 3px; width: 87.5%; height: 6px; }

/* Floating toolbar */
.toolbar { position: absolute; left: 50%; bottom: 12px; transform: translateX(-50%); display: flex; align-items: center; height: 48px; padding: 0 8px; border-radius: 13px; background: #2c2c2c; box-shadow: 0 0 0 1px #444, 0 2px 6px rgba(0, 0, 0, .4); }
.tool { width: 32px; height: 32px; border-radius: 5px; }
.tool svg { width: 24px; height: 24px; }
.tool--on { background: #0d8ce9; }
.caret { width: 17px; height: 32px; margin-right: 8px; }
.caret svg, .c { width: 8px; height: 8px; }
.tool--last { margin-right: 8px; }
.modes { display: flex; align-items: center; gap: 3px; margin-left: 17px; padding: 2px; border-radius: 5px; background: #444; color: #b3b3b3; position: relative; }
.modes::before { content: ""; position: absolute; left: -9px; top: -8px; bottom: -8px; width: 1px; background: #444; }
.modes button { width: 27px; height: 28px; border-radius: 4px; }
.modes svg { width: 18px; height: 18px; }
.modes .on { background: #2c2c2c; color: #7cc4f8; }

/* Properties panel */
.right { flex: none; position: relative; width: 241px; border-left: 1px solid #444; overflow: hidden; }
.right > section { border-bottom: 1px solid #444; }
.top { padding: 8px 8px 8px 12px; }
.top-row { display: flex; align-items: center; height: 32px; }
.top-row--tabs { height: 24px; margin: 8px 0 0 -4px; }
.avatar { width: 24px; height: 24px; margin-right: 4px; border-radius: 50%; background: #f24822; text-align: center; line-height: 24px; font-size: 12px; }
.play { margin-left: auto; }
.c--p { margin: 0 9px 0 11px; }
.share { width: 55px; height: 32px; border-radius: 5px; background: #0d8ce9; }
.ptab { height: 24px; padding: 0 8px; margin-right: 5px; border-radius: 5px; color: #b3b3b3; }
.ptab--on { background: #383838; color: #fff; font-weight: 600; }
.pct { gap: 4px; margin-left: auto; padding-right: 8px; }
.selrow { display: flex; align-items: center; height: 49px; padding: 0 8px 0 16px; gap: 4px; }
.selrow h2 { font-size: 13px; }
.selrow button { width: 24px; height: 24px; }
.selrow .c { margin-right: 5px; }
.sec { padding: 0 8px 16px 16px; }
.sec-head { display: flex; gap: 5px; height: 36px; padding-top: 4px; align-items: center; }
.labels { display: grid; grid-template-columns: 1fr 1fr 24px; gap: 8px; padding: 5px 0 3px; color: #b3b3b3; font-size: 10px; white-space: nowrap; }
.labels--tall { padding-top: 7px; }
.row { display: grid; grid-template-columns: 1fr 1fr 24px; gap: 8px; height: 24px; }
.row--gap { margin-top: 8px; }
.right .row svg, .right .sec-head svg { width: 14px; height: 14px; }
.right .row svg.s12 { width: 12px; height: 12px; }
.right .row svg.s16, .right .sec-head svg.s16 { width: 16px; height: 16px; }
.right .row svg.s10 { width: 10px; height: 10px; }
.right .row svg.c { width: 8px; height: 8px; }
.ico { width: 24px; height: 24px; grid-column: 3; border-radius: 5px; }
.ico--on { background: #394360; color: #7cc4f8; }
.seg { display: grid; grid-template-columns: 1fr 1fr 1fr; gap: 1px; overflow: hidden; border-radius: 5px; }
.seg button { background: #383838; }
.seg--wide { grid-column: 1 / 3; }
.seg--wide, .seg--flat { gap: 0; color: #c8c8c8; }
.seg--flat { background: #383838; }
.seg--flat .on { border: 1px solid #4a4a4a; border-radius: 5px; background: #2c2c2c; color: #fff; }
.fld { display: flex; align-items: center; border-radius: 5px; background: #383838; }
.fld span { display: flex; justify-content: center; width: 24px; color: #d0d0d0; }
.fld input { flex: 1; width: 0; }
.fld--off input, .fld--off { color: #8c8c8c; }
.row--link { background: linear-gradient(#383838, #383838) 84px 50% / 16px 6px no-repeat; }
.clip { display: flex; align-items: center; gap: 8px; height: 24px; margin-top: 8px; }
.clip input { appearance: none; display: grid; place-items: center; width: 16px; height: 16px; border: 1px solid #666; border-radius: 2px; }
.clip input::before { content: ""; width: 8px; height: 2px; background: #fff; }
.sel { display: grid; align-items: center; border: 1px solid #444; border-radius: 5px; }
.sel--wide { grid-column: 1 / 3; }
.sel select, .sel .c { grid-area: 1 / 1; }
.sel select { appearance: none; outline: 0; padding: 0 8px; width: 100%; }
.sel .c { justify-self: end; margin-right: 8px; pointer-events: none; }
.combo { display: grid; grid-template-columns: 1fr 24px; gap: 1px; overflow: hidden; border-radius: 5px; }
.combo input { width: 100%; padding-left: 9px; background: #383838; }
.combo button { background: #383838; }
.help { position: absolute; right: 24px; bottom: 21px; width: 31px; height: 31px; border-radius: 50%; border: 1px solid #444; background: #2c2c2c; box-shadow: 0 1px 4px rgba(0, 0, 0, .5); font-size: 20px; font-weight: 400; }

/* Windows taskbar */
.taskbar {
  flex: none;
  display: grid;
  grid-template-columns: 1fr auto 1fr;
  align-items: center;
  height: 48px;
  border-top: 1px solid #2e5a34;
  background: linear-gradient(90deg, #0b4313, #0b5016 50%, #0a4012);
  font: 400 12px/16px "Open Sans", sans-serif;
}
.taskbar svg { stroke: none; }
.weather { justify-self: start; gap: 4px; padding-left: 20px; text-align: left; }
.apps { display: flex; align-items: center; }
.apps button { width: 44px; height: 40px; }
.apps button svg { width: 24px; height: 24px; }
.apps .run { position: relative; border: 1px solid #2a6a34; border-radius: 4px; background: #1b5a25; }
.run::after { content: ""; position: absolute; bottom: 0; width: 16px; height: 3px; border-radius: 2px; background: #2bf04a; }
.tb-search { display: flex; align-items: center; width: 218px; height: 30px; margin: 0 3px 0 4px; padding: 0 8px 0 11px; border-radius: 15px; background: #f1f5f1; font-size: 13px; }
.tb-search > svg:first-child { stroke: #333; stroke-width: 2; margin-right: 9px; }
.tb-search input { flex: 1; width: 0; }
.tb-search input::placeholder { color: #5a5f5a; opacity: 1; }
.logo-l { fill: #fff; font: 700 10px "Open Sans", sans-serif; }
.tray { justify-self: end; display: flex; align-items: center; padding-right: 19px; white-space: nowrap; }
.tray svg { fill: none; stroke: #fff; margin-right: 8px; }
.tray > svg:first-child { stroke-width: 2; margin-right: 19px; }
.lang { margin-right: 16px; text-align: center; }
.tray time { margin-left: 5px; text-align: right; }
```
